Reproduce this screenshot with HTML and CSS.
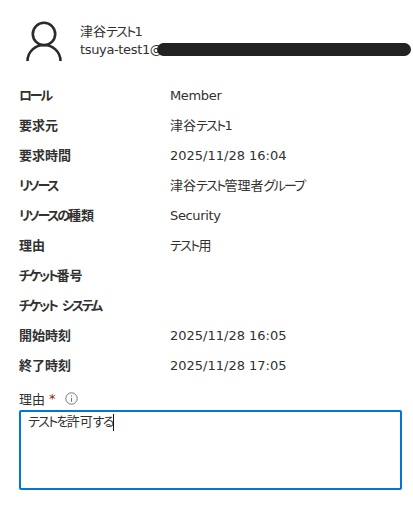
FILE: index.html
```html
<!DOCTYPE html>
<html lang="ja">
<head>
<meta charset="utf-8">
<title>承認</title>
<link rel="stylesheet" href="styles.css">
</head>
<body>
<header class="persona">
  <svg class="avatar" width="38" height="42" viewBox="0 0 38 42" fill="none" stroke="#2b2b2b" stroke-width="2.6">
    <circle cx="18" cy="13" r="11.2"/>
    <path d="M1.5 40C1.500 31 9 24 18 24S34.500 31 34.500 40"/>
  </svg>
  <div class="who">
    <div>津谷<span class="kana">テスト</span>1</div>
    <div class="mail"><span class="latin">tsuya-test1@</span><span class="redact"></span></div>
  </div>
</header>
<dl class="details">
  <div class="row"><dt><span class="kana">ロール</span></dt><dd class="latin">Member</dd></div>
  <div class="row"><dt>要求元</dt><dd>津谷<span class="kana">テスト</span>1</dd></div>
  <div class="row"><dt>要求時間</dt><dd class="date">2025/11/28 16:04</dd></div>
  <div class="row"><dt><span class="kana">リソース</span></dt><dd>津谷<span class="kana">テスト</span>管理者<span class="kana">グループ</span></dd></div>
  <div class="row"><dt><span class="kana">リソースの</span>種類</dt><dd class="latin">Security</dd></div>
  <div class="row"><dt>理由</dt><dd><span class="kana">テスト</span>用</dd></div>
  <div class="row"><dt><span class="kana">チケット</span>番号</dt><dd></dd></div>
  <div class="row"><dt><span class="kana">チケット システム</span></dt><dd></dd></div>
  <div class="row"><dt>開始時刻</dt><dd class="date">2025/11/28 16:05</dd></div>
  <div class="row"><dt>終了時刻</dt><dd class="date">2025/11/28 17:05</dd></div>
</dl>
<div class="field">
  <div class="label">理由<span class="req">*</span>
    <svg class="info" width="13" height="13" viewBox="0 0 13 13" fill="none" stroke="#777" stroke-width="1">
      <circle cx="6.500" cy="6.500" r="5.700"/>
      <path d="M6.500 5.800V9.800M6.500 3.300V4.500"/>
    </svg>
  </div>
  <div class="box"><span class="typed"><span class="kana">テストを</span>許可<span class="kana">する</span></span><span class="caret"></span></div>
</div>
</body>
</html>
```
FILE: styles.css
```css
* { box-sizing: border-box; }
html, body { margin: 0; padding: 0; background: #fff; }
body {
  width: 413px;
  height: 513px;
  overflow: hidden;
  padding: 19px 11px 0 19px;
  font-family: "DejaVu Sans", "Noto Sans CJK JP", sans-serif;
  font-feature-settings: "palt";
  font-size: 13px;
  color: #323130;
}
.latin { letter-spacing: -0.35px; }
.kana { letter-spacing: -1.7px; }
dt .kana { letter-spacing: -2.2px; word-spacing: 3px; }
.persona { display: flex; align-items: flex-start; height: 60px; padding-left: 7px; }
.avatar { display: block; margin-top: 2px; }
.who { margin-left: 16px; padding-top: 4px; line-height: 18px; }
.mail { position: relative; white-space: nowrap; }
.redact {
  position: absolute;
  left: 77px;
  top: 2px;
  width: 254px;
  height: 13px;
  border-radius: 7px;
  background: #222;
}
.details { margin: 0; }
.row { display: flex; align-items: center; height: 30px; }
dt { width: 151px; font-weight: 700; }
dd { margin: 0; }
dd.latin, dd.date { padding-top: 2px; }
.field { margin-top: 9px; }
.label { display: flex; align-items: center; height: 20px; }
.req { color: #8f2228; margin-left: 4px; }
.info { margin-left: 9px; }
.box {
  display: flex;
  align-items: flex-start;
  width: 383px;
  height: 80px;
  margin-top: 2px;
  padding: 0 7px;
  border: 2px solid #0078d4;
  border-radius: 2px;
  line-height: 20px;
}
.caret { width: 1px; height: 17px; margin-top: 2px; background: #111; }
```
